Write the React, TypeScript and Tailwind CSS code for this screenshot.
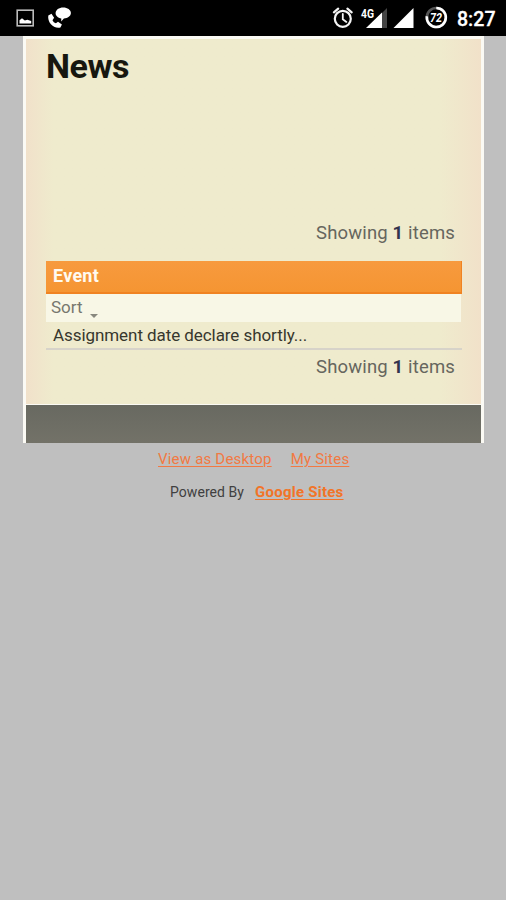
const StatusBar = () => {
  return (
    <header className="flex h-9 items-center bg-black text-white">
      <svg width="506" height="36" viewBox="0 0 506 36" fill="none">
        <rect x="17.2" y="10.2" width="16" height="15.6" stroke="#bcbcbc" strokeWidth="1.6" />
        <path d="M19.500 23.500v-3.300l2.500-2 2.800 2.300 2.600-.8 3.800 1.200v2.600z" fill="#fff" />
        <path
          d="M48.300 15.600l3.200-1.800 2.600 4-1.600 2.400c.7 1.500 1.800 2.500 3.400 3l2.100-1.500 3.900 2.700-1.500 3.200c-6.800 1.500-13.200-5-12.100-12z"
          fill="#fff"
        />
        <path
          d="M63.200 7.600c4.300 0 7.700 2.400 7.700 5.500s-3.300 5.300-7 5.500l-2.700 3 .1-3.200c-3.400-.6-5.700-2.700-5.700-5.200 0-3.200 3.400-5.600 7.600-5.600z"
          fill="#fff"
        />
        {/* alarm */}
        <g stroke="#f4f4f4" strokeLinecap="round">
          <circle cx="342.800" cy="18.800" r="8" strokeWidth="2.200" />
          <path d="M342.800 14v5.300l3.600 2.600" strokeWidth="1.800" />
          <path d="M333.900 12.300l4.300-3.700M351.700 12.300l-4.300-3.700" strokeWidth="2.200" />
        </g>
        {/* mobile signal */}
        <path d="M387 8v20h-20z" fill="#444" />
        <path d="M382 12.500v15.500h-16z" fill="#fff" />
        <text
          x="361"
          y="17.500"
          fill="#fff"
          stroke="#000"
          strokeWidth="2"
          paintOrder="stroke"
          textLength="13"
          lengthAdjust="spacingAndGlyphs"
          className="font-[Roboto,sans-serif] text-[12px] font-bold"
        >
          4G
        </text>
        <path d="M413.500 8v20h-20z" fill="#fff" />
        {/* battery ring */}
        <circle cx="436.300" cy="17.500" r="9.500" stroke="#555" strokeWidth="2.600" />
        <path d="M436.300 8a9.500 9.500 0 1 1-9.400 8.200" stroke="#fff" strokeWidth="2.600" />
        <text
          x="430"
          y="22"
          fill="#fff"
          textLength="12"
          lengthAdjust="spacingAndGlyphs"
          className="font-[Roboto,sans-serif] text-[13px] font-bold italic"
        >
          72
        </text>
        <text
          x="457"
          y="26.300"
          fill="#fff"
          stroke="#fff"
          strokeWidth="0.3"
          textLength="38.500"
          lengthAdjust="spacingAndGlyphs"
          className="font-[Roboto,sans-serif] text-[21px] font-medium"
        >
          8:27
        </text>
      </svg>
    </header>
  );
};

const ItemCount = () => {
  return (
    <p className="pr-[7px] text-right text-[18.5px] leading-6 tracking-[0.15px] text-[#66665e]">
      Showing <b className="font-bold text-[#33334d]">1</b> items
    </p>
  );
};

const App = () => {
  return (
    <div className="min-h-screen bg-[#bfbfbf] font-[Roboto,sans-serif]">
      <StatusBar />
      <main className="ml-[23px] w-[461px] border-x-[3px] border-t-[3px] border-[#fbfaf4]">
        <div className="h-[365px] bg-linear-to-r from-[#f1e1ca] via-[#efebcd] via-6% to-[#efebcd]">
          <div className="h-full bg-linear-to-l from-[#f1e1c9] to-transparent to-9% pr-[19px] pl-5">
            <h1 className="h-[182px] pt-[7px] text-[34px] leading-10 font-bold tracking-[-0.45px] text-[#17170f]">
              News
            </h1>
            <ItemCount />
            <div className="mt-4 h-[33px] border-r border-b-2 border-[#f08322] bg-linear-to-b from-[#f79a3e] to-[#f59532] pl-[7px] text-[18px] leading-[30px] font-bold tracking-[0.25px] text-[#fffaf0]">
              Event
            </div>
            <div className="mr-px flex h-7 bg-[#f8f7e6] pl-[5px] text-[17px] leading-[26px] text-[#77776f]">
              Sort
              <span className="mt-[20px] ml-[7px] h-0 w-0 border-x-4 border-t-4 border-x-transparent border-t-[#88887e]" />
            </div>
            <div className="h-7 border-b-2 border-[#d7d3c9] pl-[7px] text-[17px] leading-[26px] tracking-[-0.07px] text-[#37372d]">
              Assignment date declare shortly...
            </div>
            <div className="pt-[5px]">
              <ItemCount />
            </div>
          </div>
        </div>
        <div className="h-[39px] border-t border-[#fbfaf4] bg-linear-to-b from-[#686961] to-[#737268]" />
      </main>
      <footer className="text-[#404040]">
        <div className="flex gap-[19px] pt-[6px] pl-[158px] text-[15px] leading-5 tracking-[0.2px] text-[#f27943]">
          <a href="#" className="underline underline-offset-2">View as Desktop</a>
          <a href="#" className="underline underline-offset-2">My Sites</a>
        </div>
        <div className="flex gap-[11px] pt-[13px] pl-[170px] text-[14px] leading-5">
          <span className="tracking-[0.06px]">Powered By</span>
          <a href="#" className="text-[15px] font-bold tracking-[0.24px] text-[#f27428] underline underline-offset-2">
            Google Sites
          </a>
        </div>
      </footer>
    </div>
  );
};

export default App;
